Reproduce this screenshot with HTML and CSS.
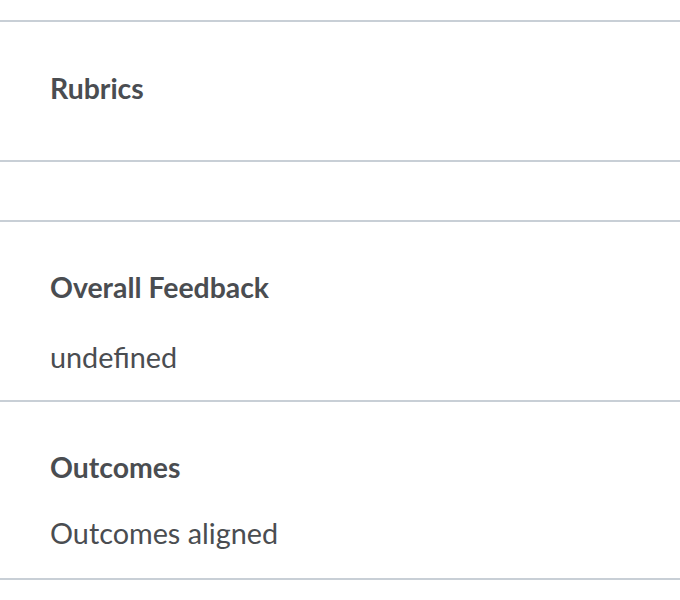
FILE: index.html
```html
<!DOCTYPE html>
<html>
<head>
<meta charset="utf-8">
<link rel="stylesheet" href="styles.css">
</head>
<body>
<div class="page">
  <div class="spacer-top"></div>
  <section class="block block-rubrics">
    <h2 class="title">Rubrics</h2>
  </section>
  <section class="block block-empty"></section>
  <section class="block block-detail block-feedback">
    <h2 class="title">Overall Feedback</h2>
    <p class="text">undefined</p>
  </section>
  <section class="block block-detail block-outcomes">
    <h2 class="title">Outcomes</h2>
    <p class="text">Outcomes aligned</p>
  </section>
</div>
</body>
</html>
```
FILE: styles.css
```css
html, body {
  margin: 0;
  padding: 0;
  background: #ffffff;
}
body {
  font-family: Lato, "Noto Sans", sans-serif;
  color: #4a4d51;
}
.page {
  display: flex;
  flex-direction: column;
}
.spacer-top {
  height: 20px;
  border-bottom: 2px solid #c8cfd6;
}
.block {
  border-bottom: 2px solid #c8cfd6;
  padding: 0 50px;
  display: flex;
  flex-direction: column;
  box-sizing: border-box;
}
.block-rubrics {
  height: 140px;
  padding-top: 48.5px;
}
.block-empty {
  height: 60px;
}
.block-detail {
  padding-top: 47.5px;
}
.block-feedback {
  height: 180px;
  gap: 36px;
}
.block-outcomes {
  height: 178px;
  gap: 32px;
}
.title {
  margin: 0;
  font-size: 28.4px;
  font-weight: 700;
  line-height: 34.56px;
}
.text {
  margin: 0;
  font-size: 28.8px;
  font-weight: 400;
  line-height: 1.2;
}
```
